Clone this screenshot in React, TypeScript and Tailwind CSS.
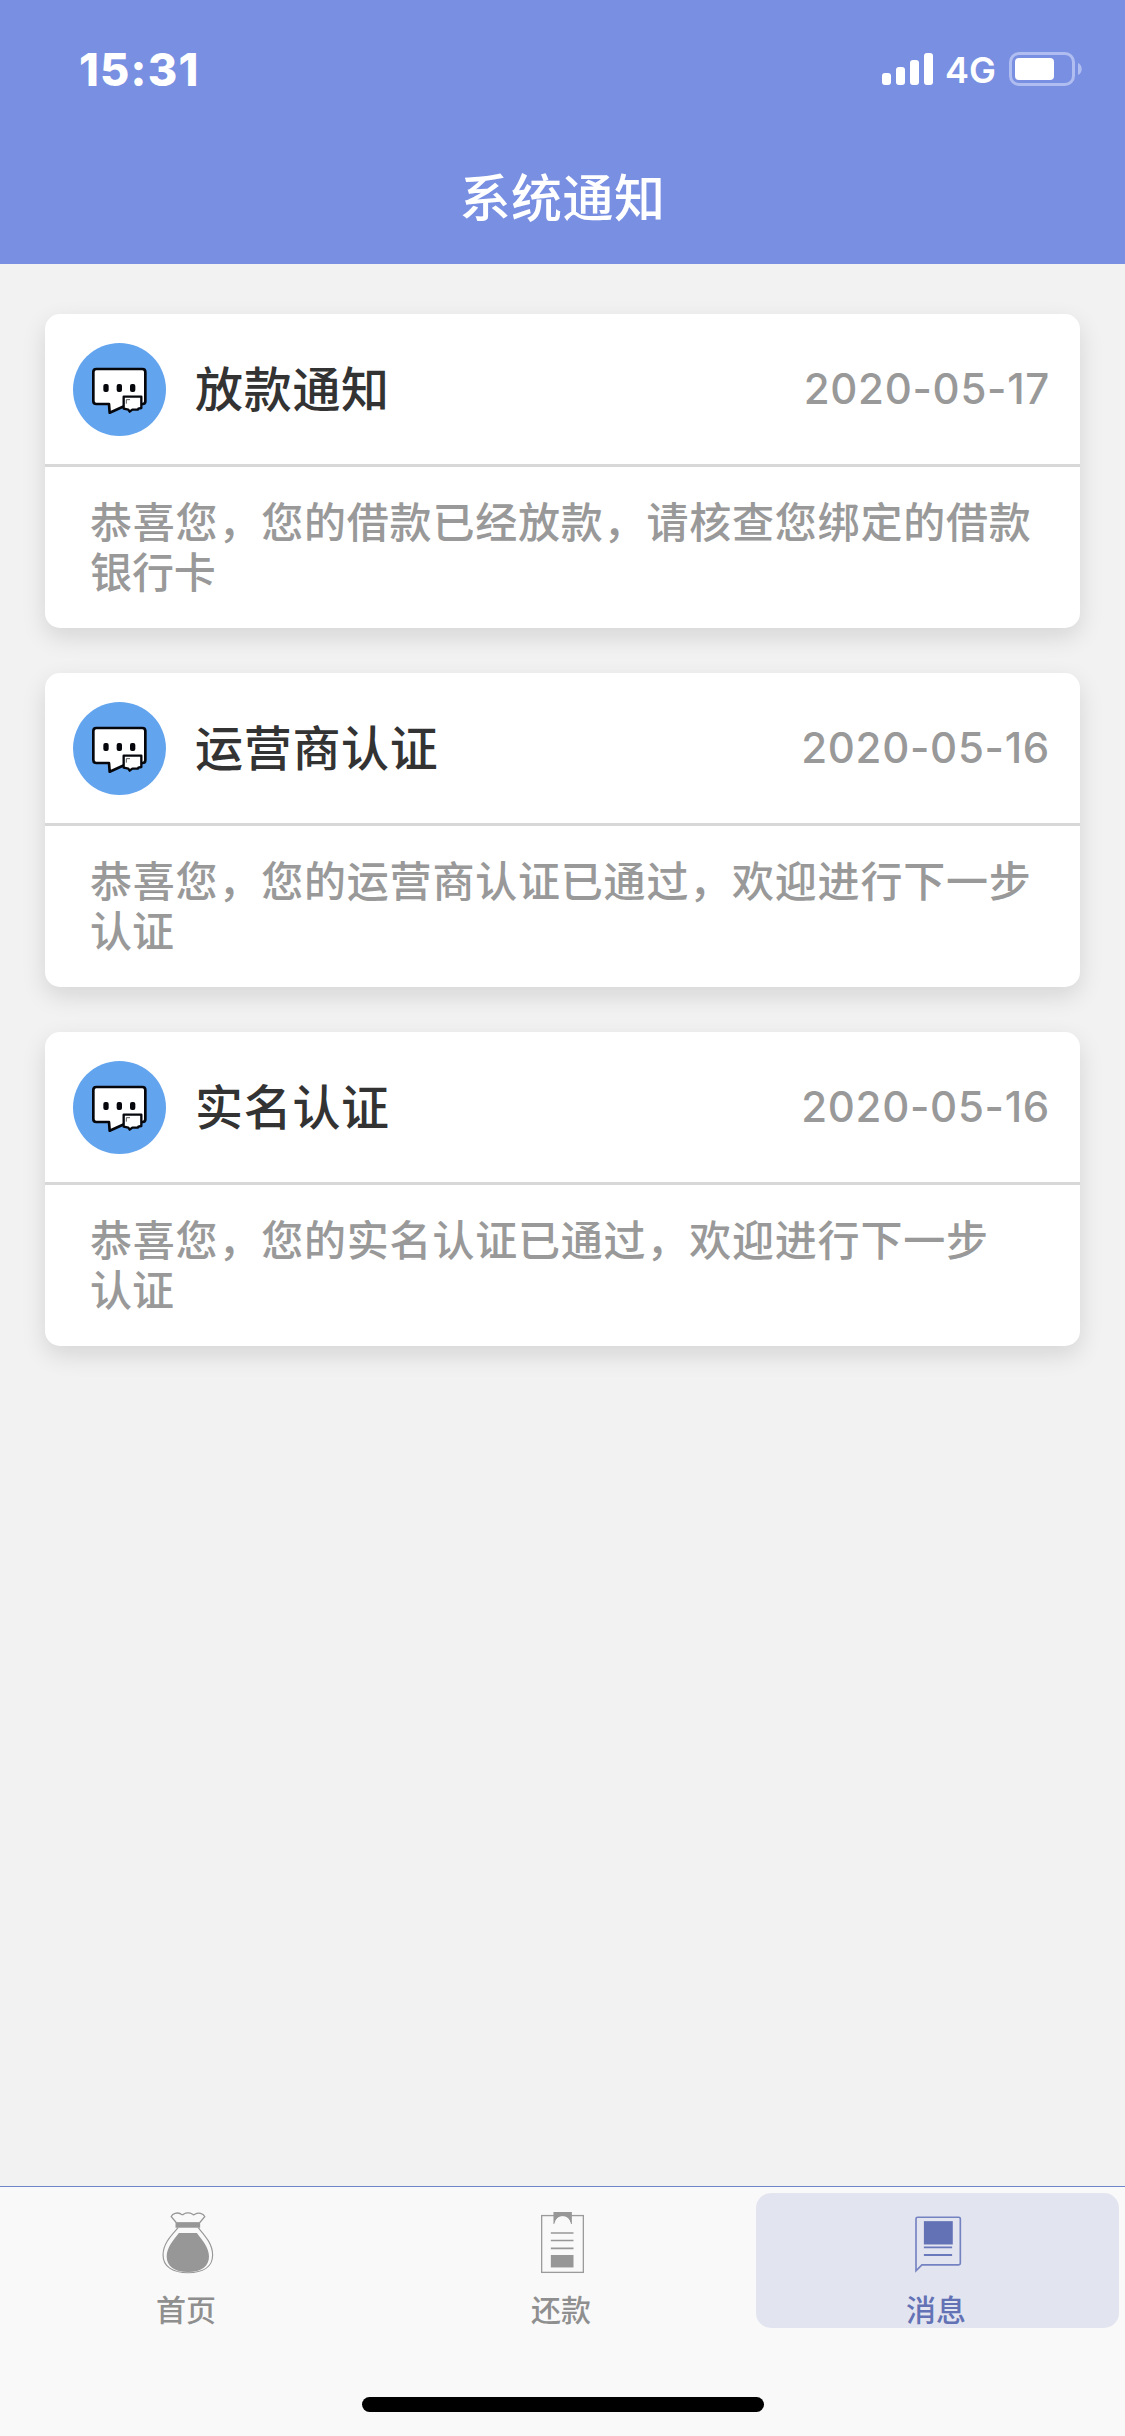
import type { ReactNode } from "react";

interface Notice {
  id: number;
  title: string;
  date: string;
  lines: string[];
}

const NOTICES: Notice[] = [
  { id: 1, title: "放款通知", date: "2020-05-17", lines: ["恭喜您，您的借款已经放款，请核查您绑定的借款", "银行卡"] },
  { id: 2, title: "运营商认证", date: "2020-05-16", lines: ["恭喜您，您的运营商认证已通过，欢迎进行下一步", "认证"] },
  { id: 3, title: "实名认证", date: "2020-05-16", lines: ["恭喜您，您的实名认证已通过，欢迎进行下一步", "认证"] },
];

function StatusBar() {
  return (
    <div className="flex h-[132px] items-start justify-between pt-[38px] pr-[43px] pl-[79px] text-white">
      <span className="text-[45px] leading-[63px] font-extrabold tracking-[1.2px]">15:31</span>
      <div className="flex h-[62px] items-center">
        <div className="flex h-8 items-end gap-[5px]">
          <i className="h-3 w-[9px] rounded-[3px] bg-white" />
          <i className="h-[18px] w-[9px] rounded-[3px] bg-white" />
          <i className="h-[25px] w-[9px] rounded-[3px] bg-white" />
          <i className="h-8 w-[9px] rounded-[3px] bg-white" />
        </div>
        <span className="ml-[12px] w-[64px] pt-[2px] text-[36px] leading-[62px] font-semibold">4G</span>
        <svg width="73" height="34" viewBox="0 0 73 34">
          <rect x="1.5" y="1.5" width="63" height="31" rx="8.5" fill="none" stroke="#b0bdf0" strokeWidth="3" />
          <rect x="6" y="6" width="39" height="22" rx="4" fill="#fff" />
          <path d="M69 11c5 2 5 10 0 12z" fill="#b0bdf0" />
        </svg>
      </div>
    </div>
  );
}

function NoticeIcon() {
  return (
    <svg width="93" height="93" viewBox="39 39 279 279" className="shrink-0">
      <circle cx="178.500" cy="178.500" r="139.500" fill="#63a4ee" />
      <path d="M109 117h138q9 0 9 9v88q0 8-8 8l-56 7-43 19-2-26h-38q-9 0-9-9v-87q0-9 9-9z" fill="#fff" stroke="#05070c" strokeWidth="8" strokeLinejoin="round" />
      <rect x="130" y="162" width="16" height="24" rx="6" fill="#05070c" />
      <rect x="170" y="162" width="16" height="24" rx="6" fill="#05070c" />
      <rect x="210" y="162" width="16" height="24" rx="6" fill="#05070c" />
      <path d="M191 200h53v34l-9 2-1 3h-17l-8 6-4-6-14-3z" fill="#fff" stroke="#05070c" strokeWidth="7" strokeLinejoin="round" />
      <path d="M199 221v-12h11" fill="none" stroke="#05070c" strokeWidth="2" />
    </svg>
  );
}

function NoticeCard({ notice }: { notice: Notice }) {
  return (
    <article className="h-[314px] rounded-[15px] bg-white shadow-[0_9px_24px_rgba(0,0,0,0.12)]">
      <div className="flex h-[153px] items-center border-b-[3px] border-[#d8d8d8] pr-[30px] pl-[28px]">
        <NoticeIcon />
        <h2 className="ml-[29px] flex-1 pt-px text-[48px] leading-[60px] font-medium tracking-[0.7px] text-[#333]">{notice.title}</h2>
        <time className="text-[42px] leading-[60px] font-medium tracking-[0.7px] text-[#999]">{notice.date}</time>
      </div>
      <div className="pt-[31px] pl-[45px] text-[42px] leading-[50px] tracking-[0.8px] text-[#999]">
        {notice.lines.map((line) => (
          <p key={line} className="font-medium whitespace-nowrap last:tracking-[-0.1px]">{line}</p>
        ))}
      </div>
    </article>
  );
}

function BagIcon() {
  return (
    <svg width="54" height="66" viewBox="92 90 162 198" fill="none" stroke="#979797" strokeWidth="4">
      <path d="M137 128l-15-18c4-10 18-14 29-8q6 4 8 1 14-8 28 0 3 3 7 0c11-7 25-3 30 7l-15 18" />
      <rect x="135" y="127" width="75" height="17" fill="#979797" stroke="none" />
      <path d="M143 144c-20 23-46 48-46 83 0 37 31 54 76 54s75-17 75-54c0-35-25-60-44-83" strokeWidth="3.500" />
      <path d="M145 160h55c14 19 37 43 37 71 0 30-21 48-64 48s-65-18-65-48c0-28 23-52 37-71z" fill="#979797" stroke="none" />
    </svg>
  );
}

function ClipboardIcon() {
  return (
    <svg width="45" height="66" viewBox="118 90 135 198">
      <rect x="122" y="107" width="127" height="173" fill="none" stroke="#9b9b9b" strokeWidth="4" />
      <path d="M158 96h56v37h-3c-3-15-12-24-25-24s-22 9-25 24h-3z" fill="#979797" />
      <path d="M161 133c3-15 12-24 25-24s22 9 25 24z" fill="#f9f9f9" />
      <path d="M150 160h69M150 183h69M150 207h69" stroke="#979797" strokeWidth="5" />
      <rect x="150" y="227" width="69" height="38" fill="#979797" />
    </svg>
  );
}

function MessageIcon() {
  return (
    <svg width="48" height="66" viewBox="520 120 144 198">
      <path d="M530 142h125q5 0 5 5v135q0 5-5 5H543l-18 18V147q0-5 5-5z" fill="none" stroke="#7482c2" strokeWidth="5" />
      <rect x="549" y="154" width="88" height="71" fill="#6272b5" />
      <path d="M549 234h86M549 257h86" stroke="#6a79bb" strokeWidth="5.500" />
    </svg>
  );
}

interface TabProps {
  label: string;
  icon: ReactNode;
  active?: boolean;
}

function Tab({ label, icon, active }: TabProps) {
  return (
    <button className={`mx-[6px] flex h-[135px] flex-1 flex-col items-center rounded-[15px] pt-[17px] ${active ? "bg-[#e2e4ef] text-[#6272b5]" : "text-[#8f8f8f]"}`}>
      {icon}
      <span className="mt-[17px] pr-[3px] text-[30px] leading-[36px] font-medium">{label}</span>
    </button>
  );
}

export default function App() {
  return (
    <div className="flex h-[2436px] w-[1125px] flex-col overflow-hidden bg-[#f2f2f2] font-[Inter,'Noto_Sans_CJK_SC',sans-serif]">
      <header className="h-[264px] bg-[#798fe1]">
        <StatusBar />
        <h1 className="pt-px text-center text-[51px] leading-[132px] font-medium tracking-[0.4px] text-white">系统通知</h1>
      </header>

      <main className="flex flex-1 flex-col gap-[45px] px-[45px] pt-[50px]">
        {NOTICES.map((notice) => (
          <NoticeCard key={notice.id} notice={notice} />
        ))}
      </main>

      <nav className="flex h-[250px] flex-col items-center border-t border-[#7086cb] bg-[#f9f9f9]">
        <div className="flex w-full pt-[6px]">
          <Tab label="首页" icon={<BagIcon />} />
          <Tab label="还款" icon={<ClipboardIcon />} />
          <Tab label="消息" icon={<MessageIcon />} active />
        </div>
        <div className="mt-[69px] h-[15px] w-[402px] rounded-full bg-black" />
      </nav>
    </div>
  );
}
